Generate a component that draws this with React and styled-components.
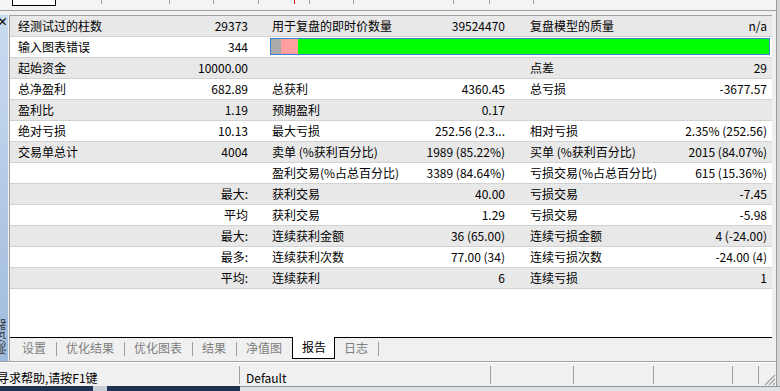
import React from 'react';
import styled, { createGlobalStyle } from 'styled-components';

const GlobalStyle = createGlobalStyle`
  body {
    margin: 0;
    font-family: "Noto Sans CJK SC", "Noto Sans", sans-serif;
  }
`;

const Screen = styled.div`
  width: 780px;
  height: 391px;
  overflow: hidden;
  display: flex;
  flex-direction: column;
  background: #f0f0f0;
  font-size: 12px;
  color: #000;
`;

const Body = styled.div`
  height: 386px;
  display: flex;
`;

const Window = styled.div`
  width: 776px;
  display: flex;
  flex-direction: column;
`;

const Backdrop = styled.div`
  flex: 1;
  border-left: 1px solid #9a9a9a;
  background: #d6d6d6;
`;

const Ruler = styled.div`
  height: 10px;
  flex: none;
  display: flex;
  align-items: flex-start;
  border-bottom: 1px solid #a0a0a0;
  background: #f4f4f4;
  overflow: hidden;
`;

const RulerBox = styled.div`
  margin-left: 12px;
  width: 42px;
  height: 5px;
  background: #fff;
  border: 1px solid #000;
  border-top: none;
`;

const Tick = styled.div`
  width: ${(p) => p.$w}px;
  height: 4px;
  border-right: 1px solid ${(p) => (p.$red ? '#e01010' : '#a0a0a0')};
  flex: none;
`;

const Main = styled.div`
  flex: 1;
  display: flex;
  padding-top: 4px;
  min-height: 0;
`;

const SideBar = styled.div`
  width: 8px;
  border-right: 1px solid #eef2f8;
  background: linear-gradient(to bottom, #c9dbf0, #9fbadc);
  display: flex;
  flex-direction: column;
  justify-content: space-between;
  overflow: hidden;
`;

const CloseMark = styled.span`
  margin: 0 0 0 -3px;
  font-size: 11px;
  font-weight: bold;
  line-height: 12px;
`;

const SideTitle = styled.span`
  writing-mode: vertical-rl;
  transform: rotate(180deg);
  margin: 0 0 6px -5px;
  font-size: 12px;
  line-height: 12px;
  color: #333;
`;

const Panel = styled.div`
  flex: 1;
  display: flex;
  flex-direction: column;
  border-left: 1px solid #a0a0a0;
  border-top: 1px solid #a0a0a0;
  background: #fff;
`;

const Gap = styled.div`
  width: 4px;
  background: #f0f0f0;
`;

const Row = styled.div`
  display: grid;
  grid-template-columns: 130px 118px 132px 125px 125px 132px;
  height: 20px;
  line-height: 20px;
  border-bottom: 1px solid #d2d2d2;
  background: ${(p) => (p.$alt ? '#e8e8e8' : '#fff')};
`;

const Label = styled.div`
  padding-left: ${(p) => p.$pad}px;
  white-space: nowrap;
`;

const Value = styled.div`
  padding-right: ${(p) => p.$pad}px;
  text-align: right;
  white-space: nowrap;
  position: relative;
  z-index: 1;
`;

const Bar = styled.div`
  grid-column: 3 / 7;
  margin: 1px 2px 2px 12px;
  border: 1px solid #3a7fd6;
  display: flex;
`;

const BarPart = styled.div`
  width: ${(p) => (p.$w ? `${p.$w}px` : 'auto')};
  flex: ${(p) => (p.$w ? 'none' : 1)};
  background: ${(p) => p.$c};
`;

const Filler = styled.div`
  flex: 1;
`;

const TabBar = styled.div`
  height: 23px;
  flex: none;
  display: flex;
  align-items: flex-start;
  padding-left: 3px;
  border-top: 1px solid #000;
  background: #f0f0f0;
`;

const Tab = styled.div`
  height: 21px;
  line-height: 20px;
  padding: ${(p) => (p.$active ? '0 8px 0 9px' : '0 10px 0 9px')};
  color: ${(p) => (p.$active ? '#000' : '#7d7d7d')};
  background: ${(p) => (p.$active ? '#fff' : 'transparent')};
  border: ${(p) => (p.$active ? '1px solid #000' : 'none')};
  border-top: none;
  margin-top: ${(p) => (p.$active ? '-1px' : '0')};
  white-space: nowrap;
`;

const TabSep = styled.div`
  width: 1px;
  height: 14px;
  margin-top: 4px;
  background: #a0a0a0;
`;

const StatusBar = styled.div`
  height: 24px;
  flex: none;
  display: flex;
  border-top: 1px solid #a0a0a0;
  box-shadow: inset 0 1px #fff;
  background: #f0f0f0;
  overflow: hidden;
`;

const StatusCell = styled.div`
  width: ${(p) => p.$w}px;
  flex: none;
  height: 18px;
  margin-top: 4px;
  padding-top: 3px;
  line-height: 17px;
  padding-left: ${(p) => p.$pad || 0}px;
  box-sizing: border-box;
  border-right: 1px solid #a0a0a0;
  white-space: nowrap;
`;

const HelpText = styled.span`
  margin-left: -3px;
`;

const Grip = styled.div`
  flex: 1;
  display: flex;
  justify-content: flex-end;
  align-items: flex-end;
`;

const Taskbar = styled.div`
  flex: 1;
  display: flex;
`;

const TaskDark = styled.div`
  width: 240px;
  background: #1d3150;
  display: flex;
  justify-content: center;
`;

const TaskMark = styled.div`
  width: 14px;
  margin-left: -40px;
  background: #c8ced6;
`;

const TaskLight = styled.div`
  flex: 1;
  background: #dfe3e8;
  border-top: 1px solid #8a96a6;
`;

const ticks = [
  { w: 45 }, { w: 67 }, { w: 43 }, { w: 44 }, { w: 35, red: true }, { w: 14 },
  { w: 43 }, { w: 99 }, { w: 35 }, { w: 43 },
];

const rows = [
  ['经测试过的柱数', '29373', '用于复盘的即时价数量', '39524470', '复盘模型的质量', 'n/a'],
  ['输入图表错误', '344', null],
  ['起始资金', '10000.00', '', '', '点差', '29'],
  ['总净盈利', '682.89', '总获利', '4360.45', '总亏损', '-3677.57'],
  ['盈利比', '1.19', '预期盈利', '0.17', '', ''],
  ['绝对亏损', '10.13', '最大亏损', '252.56 (2.3...', '相对亏损', '2.35% (252.56)'],
  ['交易单总计', '4004', '卖单 (%获利百分比)', '1989 (85.22%)', '买单 (%获利百分比)', '2015 (84.07%)'],
  ['', '', '盈利交易(%占总百分比)', '3389 (84.64%)', '亏损交易(%占总百分比)', '615 (15.36%)'],
  ['', '最大:', '获利交易', '40.00', '亏损交易', '-7.45'],
  ['', '平均', '获利交易', '1.29', '亏损交易', '-5.98'],
  ['', '最大:', '连续获利金额', '36 (65.00)', '连续亏损金额', '4 (-24.00)'],
  ['', '最多:', '连续获利次数', '77.00 (34)', '连续亏损次数', '-24.00 (4)'],
  ['', '平均:', '连续获利', '6', '连续亏损', '1'],
];

const tabs = ['设置', '优化结果', '优化图表', '结果', '净值图', '报告', '日志'];
const activeTab = 5;

const App = () => {
  return (
    <Screen>
      <GlobalStyle />
      <Body>
        <Window>
          <Ruler>
            <RulerBox />
            {ticks.map((t, i) => (
              <Tick key={i} $w={t.w} $red={t.red} />
            ))}
          </Ruler>
          <Main>
            <SideBar>
              <CloseMark>×</CloseMark>
              <SideTitle>测试器</SideTitle>
            </SideBar>
            <Panel>
              {rows.map((r, i) => (
                <Row key={i} $alt={i % 2 === 0}>
                  <Label $pad={8}>{r[0]}</Label>
                  <Value $pad={10}>{r[1]}</Value>
                  {r[2] === null ? (
                    <Bar>
                      <BarPart $w={10} $c="#aaaaaa" />
                      <BarPart $w={17} $c="#ff9f9f" />
                      <BarPart $c="#00ff00" />
                    </Bar>
                  ) : (
                    <>
                      <Label $pad={14}>{r[2]}</Label>
                      <Value $pad={10}>{r[3]}</Value>
                      <Label $pad={15}>{r[4]}</Label>
                      <Value $pad={5}>{r[5]}</Value>
                    </>
                  )}
                </Row>
              ))}
              <Filler />
              <TabBar>
                {tabs.map((t, i) => {
                  const nextIsActive = i + 1 === activeTab;
                  const isActive = i === activeTab;
                  return (
                    <React.Fragment key={t}>
                      <Tab $active={isActive}>{t}</Tab>
                      {!isActive && !nextIsActive && <TabSep />}
                    </React.Fragment>
                  );
                })}
              </TabBar>
            </Panel>
            <Gap />
          </Main>
          <StatusBar>
            <StatusCell $w={240}>
              <HelpText>寻求帮助,请按F1键</HelpText>
            </StatusCell>
            <StatusCell $w={251} $pad={6}>Default</StatusCell>
            <StatusCell $w={83} />
            <StatusCell $w={80} />
            <StatusCell $w={79} />
            <StatusCell $w={26} />
            <Grip>
              <svg width="14" height="14" viewBox="0 0 14 14">
                <path d="M13 3 L3 13 M13 7 L7 13 M13 11 L11 13" stroke="#a0a0a0" strokeWidth="1.2" />
              </svg>
            </Grip>
          </StatusBar>
        </Window>
        <Backdrop />
      </Body>
      <Taskbar>
        <TaskDark>
          <TaskMark />
        </TaskDark>
        <TaskLight />
      </Taskbar>
    </Screen>
  );
};

export default App;
